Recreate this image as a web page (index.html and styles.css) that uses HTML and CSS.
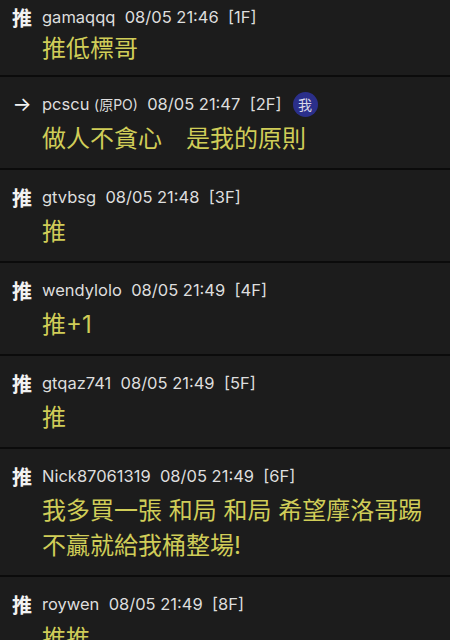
FILE: index.html
```html
<!DOCTYPE html>
<html lang="zh-Hant">
<head>
  <meta charset="UTF-8" />
  <meta name="viewport" content="width=device-width, initial-scale=1.0" />
  <title>推文</title>
  <link rel="stylesheet" href="styles.css">
</head>
<body>
  <div class="thread">
    <div class="push">
      <div class="push-head"><span class="tag">推</span><span class="meta">gamaqqq&nbsp; 08/05 21:46&nbsp; [1F]</span></div>
      <div class="push-body">推低標哥</div>
    </div>
    <div class="push">
      <div class="push-head"><span class="tag arrow">→</span><span class="meta">pcscu <small>(原PO)</small>&nbsp; 08/05 21:47&nbsp; [2F]</span><span class="me">我</span></div>
      <div class="push-body">做人不貪心　是我的原則</div>
    </div>
    <div class="push">
      <div class="push-head"><span class="tag">推</span><span class="meta">gtvbsg&nbsp; 08/05 21:48&nbsp; [3F]</span></div>
      <div class="push-body">推</div>
    </div>
    <div class="push">
      <div class="push-head"><span class="tag">推</span><span class="meta">wendylolo&nbsp; 08/05 21:49&nbsp; [4F]</span></div>
      <div class="push-body">推+1</div>
    </div>
    <div class="push">
      <div class="push-head"><span class="tag">推</span><span class="meta">gtqaz741&nbsp; 08/05 21:49&nbsp; [5F]</span></div>
      <div class="push-body">推</div>
    </div>
    <div class="push">
      <div class="push-head"><span class="tag">推</span><span class="meta">Nick87061319&nbsp; 08/05 21:49&nbsp; [6F]</span></div>
      <div class="push-body">我多買一張 和局 和局 希望摩洛哥踢不贏就給我桶整場!</div>
    </div>
    <div class="push">
      <div class="push-head"><span class="tag">推</span><span class="meta">roywen&nbsp; 08/05 21:49&nbsp; [8F]</span></div>
      <div class="push-body">推推</div>
    </div>
  </div>
</body>
</html>
```

FILE: styles.css
```css
body { margin: 0; background: #1c1c1c; font-family: Inter, "Noto Sans CJK TC", sans-serif; overflow: hidden; }
.thread { margin-top: -10px; }
.push { padding: 15px 16px 12px 12px; border-bottom: 2px solid #0b0b0b; }
.push:first-child { padding-bottom: 9px; }
.push:first-child .push-body { margin-top: 2px; }
.push-head { display: flex; align-items: center; height: 24px; }
.tag { width: 20px; margin-right: 10px; font-size: 20px; font-weight: bold; color: #f2f2f2; text-align: center; }
.tag.arrow { font-size: 20px; font-weight: normal; }
.meta { font-size: 16.5px; color: #dedede; white-space: nowrap; }
.meta small { font-size: 14px; }
.me {
  margin-left: 11px; width: 25px; height: 25px; border-radius: 50%;
  background: #2b2f8a; color: #d8d8e8; font-size: 14px;
  display: flex; align-items: center; justify-content: center;
}
.push-body { margin-top: 5px; padding-left: 30px; font-size: 24px; line-height: 35px; color: #d0cd58; }
```
